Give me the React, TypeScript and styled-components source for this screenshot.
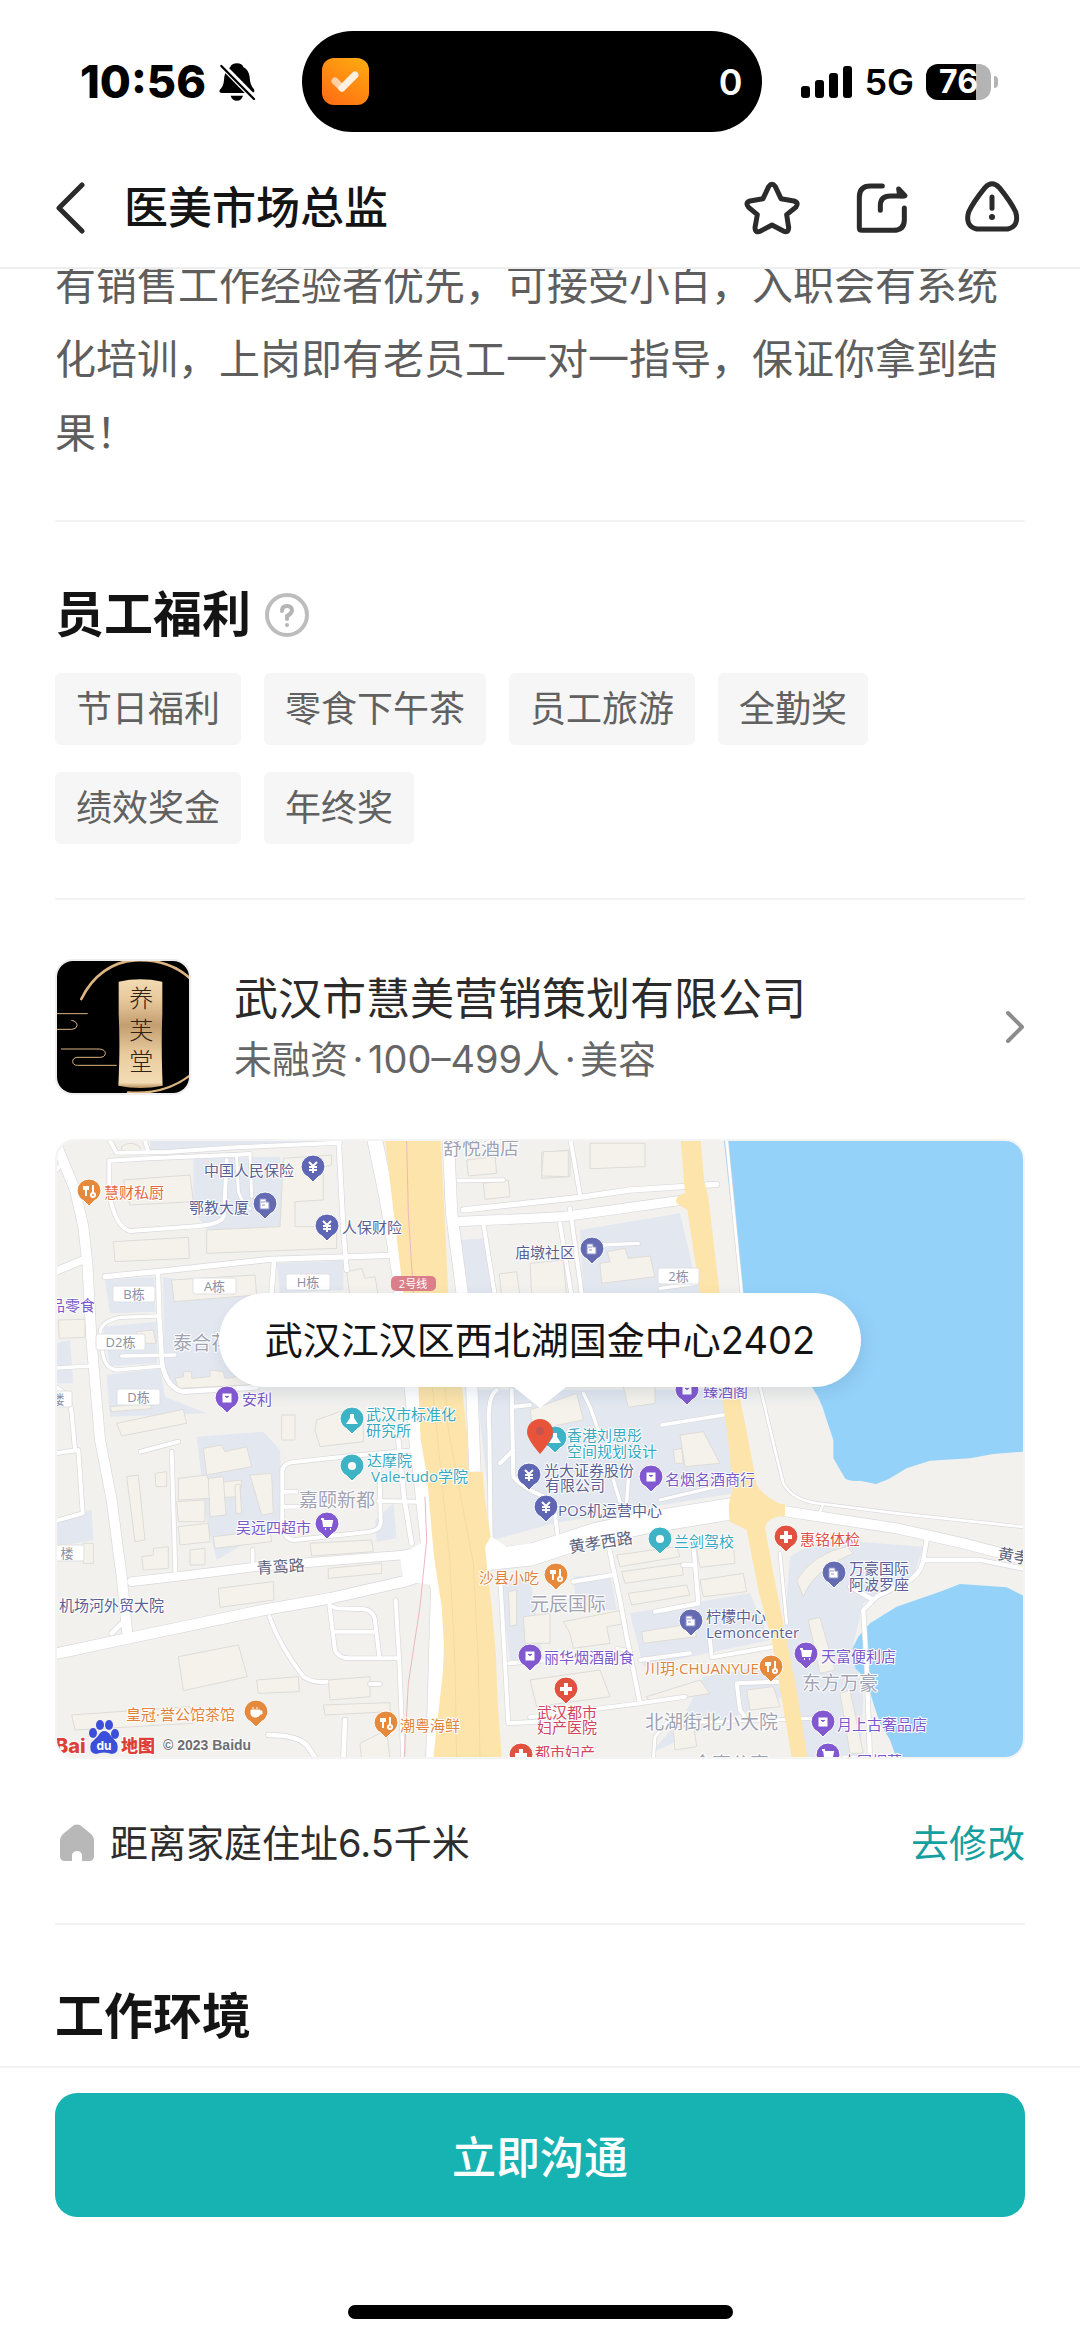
import React from "react";
import styled, { createGlobalStyle } from "styled-components";

const GlobalStyle = createGlobalStyle`
  *, *::before, *::after { box-sizing: border-box; }
  body {
    margin: 0;
    background: #ffffff;
    color: #141414;
    font-family: Inter, "Noto Sans CJK SC", sans-serif;
  }
  h1, h2, p, ul { margin: 0; padding: 0; }
  button { border: 0; padding: 0; background: none; font: inherit; color: inherit; cursor: pointer; }
  svg { display: block; flex: none; }
`;

const Page = styled.div`
  min-height: 100vh;
  display: flex;
  flex-direction: column;
  background: #ffffff;
`;

/* ---------- header ---------- */

const Header = styled.header`
  position: sticky;
  top: 0;
  z-index: 2;
  background: #ffffff;
  border-bottom: 2px solid #eeeeee;
`;

const StatusBar = styled.div`
  display: flex;
  align-items: center;
  padding: 31px 82px 16px 80px;
  color: #000000;
`;

const ClockGroup = styled.div`
  flex: 1;
  display: flex;
  align-items: center;
  gap: 12px;
`;

const Clock = styled.span`
  font-size: 45px;
  line-height: 48px;
  font-weight: 800;
`;

const Island = styled.div`
  flex: none;
  width: 460px;
  height: 101px;
  padding: 0 20px;
  border-radius: 51px;
  background: #000000;
  color: #ffffff;
  display: flex;
  align-items: center;
  justify-content: space-between;
  font-size: 36px;
  font-weight: 600;
`;

const SignalGroup = styled.div`
  margin-left: 39px;
  display: flex;
  align-items: center;
`;

const NetworkLabel = styled.span`
  margin: 0 12px;
  font-size: 36px;
  line-height: 40px;
  font-weight: 600;
`;

const Battery = styled.span`
  width: 65px;
  height: 36px;
  border-radius: 12px;
  background: linear-gradient(to right, #000000 77%, #b4b4b4 77%);
  color: #ffffff;
  font-size: 32px;
  line-height: 36px;
  font-weight: 700;
  text-align: center;
`;

const BatteryNub = styled.span`
  width: 4px;
  height: 12px;
  margin-left: 3px;
  border-radius: 0 6px 6px 0;
  background: #b4b4b4;
`;

const NavBar = styled.nav`
  display: flex;
  align-items: center;
  height: 119px;
  padding: 0 56px 0 55px;
`;

const NavTitle = styled.h1`
  flex: 1;
  margin-left: 39px;
  font-size: 44px;
  line-height: 60px;
  font-weight: 500;
`;

const NavActions = styled.div`
  display: flex;
  gap: 46px;
`;

/* ---------- content ---------- */

const Content = styled.main`
  flex: 1;
  padding: 0 55px;
  margin-top: -21px;
`;

const Section = styled.section<{ $top: number; $bottom: number; $last?: boolean }>`
  padding: ${(p) => p.$top}px 0 ${(p) => p.$bottom}px;
  border-bottom: ${(p) => (p.$last ? "0" : "2px solid #f3f3f3")};
`;

const Description = styled.p`
  font-size: 41px;
  line-height: 74px;
  color: #5e5e5e;
`;

const HeadingRow = styled.div`
  display: flex;
  align-items: center;
  gap: 14px;
`;

const Heading = styled.h2`
  font-size: 49px;
  line-height: 60px;
  font-weight: 700;
`;

const TagList = styled.ul`
  display: flex;
  flex-wrap: wrap;
  gap: 27px 23px;
  margin-top: 28px;
  max-width: 900px;
  list-style: none;
`;

const Tag = styled.li`
  padding: 0 21px;
  border-radius: 6px;
  background: #f6f6f6;
  color: #616161;
  font-size: 36px;
  line-height: 72px;
`;

const CompanyLink = styled.a`
  display: flex;
  align-items: center;
  color: #2b2b2b;
  text-decoration: none;
`;

const CompanyLogo = styled.span`
  flex: none;
  width: 136px;
  height: 136px;
  border: 2px solid #eeeeee;
  border-radius: 18px;
  overflow: hidden;
`;

const CompanyText = styled.span`
  flex: 1;
  display: flex;
  flex-direction: column;
  gap: 4px;
  margin-left: 43px;
  padding-top: 4px;
`;

const CompanyName = styled.span`
  font-size: 44px;
  line-height: 56px;
`;

const CompanyFacts = styled.span`
  display: flex;
  font-size: 38px;
  line-height: 56px;
  color: #666666;
`;

const Dot = styled.span`
  width: 20px;
  text-align: center;
`;

const MapCard = styled.div`
  position: relative;
  height: 620px;
  margin-top: 44px;
  border: 2px solid #f4f4f4;
  border-radius: 20px;
  overflow: hidden;

  > svg { width: 100%; height: 100%; }
`;

const Callout = styled.div`
  position: absolute;
  top: 152px;
  left: 0;
  right: 0;
  width: fit-content;
  margin: 0 auto;
  padding: 0 46px;
  border-radius: 47px;
  background: #ffffff;
  font-size: 38px;
  line-height: 94px;
  white-space: nowrap;
  box-shadow: 4px 6px 16px rgba(60, 90, 130, 0.14);

  &::after {
    content: "";
    position: absolute;
    top: 100%;
    left: 50%;
    margin-left: -26px;
    border: 26px solid transparent;
    border-top: 21px solid #ffffff;
    border-bottom: 0;
  }
`;

const DistanceRow = styled.div`
  display: flex;
  align-items: center;
  gap: 16px;
  margin-top: 56px;
  font-size: 38px;
  line-height: 56px;
  color: #2d2d2d;
`;

const EditLink = styled.a`
  margin-left: auto;
  color: #159fa0;
  text-decoration: none;
`;

/* ---------- footer ---------- */

const Footer = styled.footer`
  position: sticky;
  bottom: 0;
  z-index: 2;
  padding: 25px 55px 22px;
  border-top: 2px solid #f3f3f3;
  background: #ffffff;
`;

const ChatButton = styled.button`
  display: block;
  width: 100%;
  height: 124px;
  border-radius: 22px;
  background: #17b3b3;
  color: #ffffff;
  font-size: 44px;
  font-weight: 500;
`;

const HomeIndicator = styled.div`
  width: 385px;
  height: 14px;
  margin: 88px auto 0;
  border-radius: 7px;
  background: #000000;
`;

/* ---------- icons ---------- */

const BellOff = () => (
  <svg width="38" height="40" viewBox="472 122 114 120" aria-hidden="true">
    <path d="M529 126Q513 126 509 137Q491 148 490 176Q489 194 477 206Q474 215 484 215H574Q584 213 580 204Q568 192 567 168Q565 146 548 137Q544 126 529 126Z" />
    <path d="M510 223H547Q542 238 529 238Q514 238 510 223Z" />
    <path d="M470 118L592 242" stroke="#fff" strokeWidth="19" />
    <path d="M482 134L580 233" stroke="#000" strokeWidth="7" strokeLinecap="round" />
  </svg>
);

const TaskBadge = () => (
  <svg width="47" height="47" viewBox="0 0 47 47" aria-hidden="true">
    <defs>
      <linearGradient id="badge" x1="0.8" y1="0" x2="0.2" y2="1">
        <stop offset="0" stopColor="#ffa810" />
        <stop offset="1" stopColor="#ff6e14" />
      </linearGradient>
    </defs>
    <rect width="47" height="47" rx="12" fill="url(#badge)" />
    <path d="M13 23L20 30" stroke="#ffd0a6" strokeWidth="7" strokeLinecap="round" />
    <path d="M20 30L33 17" stroke="#fff0e0" strokeWidth="7" strokeLinecap="round" />
  </svg>
);

const SignalBars = () => (
  <svg width="51" height="32" viewBox="0 0 51 32" aria-hidden="true">
    <rect x="0" y="20" width="9" height="12" rx="3" />
    <rect x="14" y="14" width="9" height="18" rx="3" />
    <rect x="28" y="7" width="9" height="25" rx="3" />
    <rect x="42" y="0" width="9" height="32" rx="3" />
  </svg>
);

const BackIcon = () => (
  <svg width="30" height="54" viewBox="0 0 30 54" fill="none" stroke="#2b2b2b" strokeWidth="5" strokeLinecap="round" strokeLinejoin="round" aria-hidden="true">
    <path d="M27 4L4 27L27 50" />
  </svg>
);

const navStroke = {
  width: 64,
  height: 64,
  fill: "none",
  stroke: "#2b2b2b",
  strokeWidth: 15,
  strokeLinecap: "round" as const,
  strokeLinejoin: "round" as const,
  "aria-hidden": true,
};

const StarIcon = () => (
  <svg {...navStroke} viewBox="121 467 192 192">
    <path d="M227 499L244 535L283 542Q299 547 288 561L261 583L267 622Q266 640 251 632L217 614L183 632Q167 640 166 622L173 583L147 561Q135 547 151 542L190 535L207 499Q217 485 227 499Z" />
  </svg>
);

const ShareIcon = () => (
  <svg {...navStroke} viewBox="451 467 192 192">
    <path d="M548 497H512Q479 497 479 530V622Q479 630 487 630H580Q614 630 614 598V563" />
    <path d="M542 570V556Q542 527 572 527H612" />
    <path d="M597 506L616 526H600Z" fill="#2b2b2b" />
  </svg>
);

const AlertIcon = () => (
  <svg {...navStroke} viewBox="782 467 192 192">
    <path d="M857 502Q878 479 900 502Q935 545 949 575Q961 617 925 626H832Q796 617 808 575Q822 545 857 502Z" />
    <path d="M878 530V564" />
    <circle cx="878" cy="590" r="9" fill="#2b2b2b" stroke="none" />
  </svg>
);

const HelpIcon = () => (
  <svg width="44" height="44" viewBox="0 0 44 44" fill="none" aria-hidden="true">
    <circle cx="22" cy="22" r="20" stroke="#bdbdbd" strokeWidth="4" />
    <path d="M17 18Q17 13 22 13Q27 13 27 18Q26 21 22 23V26" stroke="#b5b5b5" strokeWidth="4" strokeLinecap="round" />
    <circle cx="22" cy="32" r="2" fill="#b5b5b5" />
  </svg>
);

const ChevronRight = () => (
  <svg width="20" height="34" viewBox="0 0 20 34" fill="none" stroke="#8c8c8c" strokeWidth="4" strokeLinecap="round" strokeLinejoin="round" aria-hidden="true">
    <path d="M3 3L17 17L3 31" />
  </svg>
);

const HouseIcon = () => (
  <svg width="39" height="38" viewBox="0 0 39 38" aria-hidden="true">
    <path fill="#b8b8b8" d="M19 1Q22 0 25 1L36 10Q39 13 39 16V32Q39 37 34 37H27V31Q26 27 22 27Q18 27 17 31V37H10Q5 37 5 32V16Q5 13 8 10Z" />
  </svg>
);

const LogoArt = () => (
  <svg width="132" height="132" viewBox="22 30 396 396" aria-hidden="true">
    <defs>
      <linearGradient id="scroll" x1="0" y1="0" x2="0" y2="1">
        <stop offset="0" stopColor="#f3dbb2" />
        <stop offset="0.2" stopColor="#e6c79a" />
        <stop offset="0.42" stopColor="#c39e70" />
        <stop offset="0.7" stopColor="#e9cda0" />
        <stop offset="0.95" stopColor="#f3dcb4" />
        <stop offset="1" stopColor="#b98f5c" />
      </linearGradient>
    </defs>
    <rect x="22" y="30" width="396" height="396" fill="#000" />
    <g fill="none" stroke="#dcb582" strokeLinecap="round">
      <path strokeWidth="8" d="M95 144C130 72 190 32 255 28C320 25 380 42 425 86" />
      <path strokeWidth="7" d="M235 424C310 430 375 410 425 370" />
      <path strokeWidth="3" d="M22 188H113M66 208Q84 212 82 224Q80 235 66 235H22" />
      <path strokeWidth="3" d="M35 294H150Q167 296 167 307Q166 319 150 319H82Q69 321 69 332Q70 343 84 343H200" />
    </g>
    <path fill="url(#scroll)" d="M207 92Q272 78 338 92V190Q334 280 339 404Q272 418 206 404Q212 280 207 190Z" />
    <g fontFamily="'Noto Sans CJK SC', sans-serif" fontSize="72" fontWeight="300" fill="#2f2114" textAnchor="middle">
      <text x="275" y="168">养</text>
      <text x="275" y="264">芙</text>
      <text x="275" y="357">堂</text>
    </g>
  </svg>
);

/* ---------- map ---------- */

type PinKind = "yen" | "food" | "building" | "bag" | "flask" | "dot" | "cart" | "cross" | "cup";

const INK = {
  blue: "#5a5f94",
  orange: "#e0823a",
  coral: "#e36a3c",
  purple: "#7a58c8",
  teal: "#35a9bf",
  red: "#dc5148",
  rose: "#cf4560",
  area: "#9fa3b2",
  road: "#5f637c",
};

const PIN_FILL: Record<PinKind, string> = {
  yen: "#5f66b4",
  building: "#646bb0",
  food: "#e5893d",
  cup: "#e5893d",
  bag: "#8158cf",
  cart: "#8158cf",
  flask: "#3fb3c6",
  dot: "#3fb3c6",
  cross: "#e0523f",
};

const PIN_ART: Record<PinKind, React.ReactNode> = {
  yen: <path d="M-4 -5L0 -1L4 -5M0 -1V6M-4 0H4M-4 3H4" stroke="#fff" strokeWidth="2" fill="none" />,
  building: <path d="M-5 5V-5H1V-2H4V5ZM-3 -3V-1M-1 -3V-1M-3 1H0" fill="#fff" stroke="#8f95cc" strokeWidth="1" />,
  food: <path d="M-5 -5V-2H-1V-5M-3 -5V5M4 -6V2M2 4A2 2 0 1 0 6 4A2 2 0 1 0 2 4" stroke="#fff" strokeWidth="2" fill="none" />,
  cup: <path d="M-5 -2H4V2Q3 5 0 5H-2Q-5 4 -5 2ZM4 -1H6V2H4M-3 -5V-3M1 -5V-3" fill="#fff" stroke="#fff" strokeWidth="1" />,
  bag: <path d="M-5 -5H5V5H-5ZM-2 -2Q0 1 2 -2" fill="#fff" stroke="#8158cf" strokeWidth="1" />,
  cart: <path d="M-6 -5H-4L-3 2H4L5 -3H-4M-2 5H-1M3 5H4" fill="#fff" stroke="#fff" strokeWidth="2" />,
  flask: <path d="M-2 -5H2V-1L6 5H-6L-2 -1Z" fill="#fff" />,
  dot: <circle r="4" fill="#fff" />,
  cross: <path d="M0 -6V6M-6 0H6" stroke="#fff" strokeWidth="4" />,
};

const PINS: [number, number, PinKind][] = [
  [257, 26, "yen"], [33, 50, "food"], [209, 63, "building"], [271, 85, "yen"],
  [536, 108, "building"], [171, 257, "bag"], [296, 278, "flask"], [296, 325, "dot"],
  [271, 383, "cart"], [200, 571, "cup"], [330, 582, "food"], [500, 434, "food"],
  [499, 297, "flask"], [473, 334, "yen"], [595, 336, "bag"], [490, 366, "yen"],
  [604, 398, "dot"], [730, 396, "cross"], [778, 432, "building"], [635, 480, "building"],
  [474, 515, "bag"], [750, 513, "cart"], [715, 526, "food"], [510, 548, "cross"],
  [767, 581, "bag"], [465, 614, "cross"], [772, 614, "cart"], [631, 249, "bag"],
];

const PLACES: [number, number, string, string][] = [
  [148, 29, "中国人民保险", INK.blue],
  [48, 51, "慧财私厨", INK.coral],
  [133, 66, "鄂教大厦", INK.blue],
  [286, 86, "人保财险", INK.blue],
  [459, 111, "庙墩社区", INK.blue],
  [-6, 164, "品零食", INK.purple],
  [186, 258, "安利", INK.purple],
  [310, 273, "武汉市标准化", INK.teal],
  [310, 289, "研究所", INK.teal],
  [311, 319, "达摩院", INK.teal],
  [315, 335, "Vale-tudo学院", INK.teal],
  [180, 386, "吴远四超市", INK.purple],
  [3, 464, "机场河外贸大院", INK.blue],
  [70, 573, "皇冠·誉公馆茶馆", INK.orange],
  [344, 584, "潮粤海鲜", INK.orange],
  [423, 436, "沙县小吃", INK.orange],
  [511, 294, "香港刘思彤", INK.teal],
  [511, 310, "空间规划设计", INK.teal],
  [488, 329, "光大证券股份", INK.blue],
  [489, 344, "有限公司", INK.blue],
  [609, 338, "名烟名酒商行", INK.purple],
  [502, 369, "POS机运营中心", INK.blue],
  [618, 400, "兰剑驾校", INK.teal],
  [744, 398, "惠铭体检", INK.red],
  [793, 427, "万豪国际", INK.blue],
  [793, 443, "阿波罗座", INK.blue],
  [650, 475, "柠檬中心", INK.blue],
  [650, 491, "Lemoncenter", INK.blue],
  [488, 516, "丽华烟酒副食", INK.purple],
  [765, 515, "天富便利店", INK.purple],
  [589, 527, "川玥·CHUANYUE", INK.orange],
  [481, 571, "武汉都市", INK.rose],
  [481, 586, "妇产医院", INK.rose],
  [781, 583, "月上古奢品店", INK.purple],
  [479, 611, "都市妇产", INK.rose],
  [786, 620, "中国烟草", INK.purple],
  [647, 250, "臻酒阁", INK.purple],
];

const AREAS: [number, number, string][] = [
  [387, 7, "舒悦酒店"],
  [117, 202, "泰合花园"],
  [243, 359, "嘉颐新都"],
  [474, 463, "元辰国际"],
  [746, 542, "东方万豪"],
  [589, 581, "北湖街北小大院"],
  [637, 623, "金嘉公寓"],
];

const BLOCK_SIGNS: [number, number, number, string][] = [
  [57, 153, 42, "B栋"], [137, 145, 43, "A栋"], [230, 141, 44, "H栋"], [40, 201, 49, "D2栋"],
  [61, 256, 43, "D栋"], [602, 135, 41, "2栋"], [-6, 412, 34, "楼"], [-12, 258, 28, "楼"],
];

/* Each road: stroke width followed by its centre line. */
const ROADS: [number, string][] = [
  [12, "M180 33L200 68L350 66L560 52L870 38M285 33L295 66"],
  [12, "M178 92V190Q195 290 240 303L420 290Q520 285 522 255L530 90M178 92L300 85L560 74L600 72"],
  [9, "M560 80L565 185Q580 225 600 235M600 75L605 200"],
  [30, "M15 33L75 180L100 290L112 400L125 640L150 930L185 1110L215 1340L232 1510"],
  [22, "M15 425L110 385"],
  [12, "M15 60L45 90L20 120"],
  [16, "M165 440L320 425L660 388L1020 376"],
  [14, "M324 430L328 560L336 700Q350 775 400 785L620 772"],
  [14, "M672 390L664 500M866 33L880 300L890 420"],
  [10, "M325 558L210 562Q150 575 150 610L160 680Q170 718 200 720L335 708M215 678L375 675M20 714L120 708"],
  [12, "M15 770Q60 790 65 850L75 960M15 970L85 960L98 1150L20 1172"],
  [44, "M975 33L1010 200L1050 440L1085 760L1100 930L1135 1240L1165 1380L1160 1540L1150 1900"],
  [34, "M1195 33L1205 250L1235 480L1265 760L1275 1030"],
  [11, "M1218 33L1190 200M1225 152L1360 150"],
  [16, "M1240 240L1590 202L1740 180L2000 163"],
  [28, "M1215 275L1440 265L1540 260L1700 238L1900 210"],
  [12, "M1562 33L1590 195M1560 235L1580 380L1596 500M1530 280L1565 500M1300 280L1335 500"],
  [10, "M1650 345L1765 340M1830 475L1940 460"],
  [26, "M245 1355L420 1335L620 1310L1060 1275L1160 1255"],
  [32, "M0 1575L210 1530L640 1440L840 1405L1060 1355L1170 1320"],
  [12, "M608 1260V1310M365 965L376 1325M272 965L385 935"],
  [12, "M700 1015Q705 1000 725 997L900 978L1100 960M697 1015V1190Q705 1232 735 1230L960 1205Q995 1200 992 1170L988 1010M985 1113L1100 1115M700 1085H740M700 1130H745"],
  [14, "M1045 930L1062 1100L1085 1240"],
  [12, "M658 1460Q690 1550 760 1640Q790 1660 830 1655M960 1662H990"],
  [12, "M838 1425L855 1560Q865 1585 900 1585L1040 1585M838 1425L860 1435L945 1438Q975 1445 976 1480L988 1580M850 1505L972 1505M1037 1410L1048 1600L1060 1890"],
  [14, "M655 1815Q740 1815 770 1845L800 1890M885 1770L880 1890M185 1510L215 1480"],
  [12, "M1350 1330L1375 1780L1460 1775M1378 1600L1500 1590"],
  [12, "M1340 780Q1310 800 1318 900L1322 1240M1385 780L1390 1040Q1420 1080 1510 1110L1522 1210M1390 830L1440 825M1350 1000L1390 960"],
  [10, "M1600 790L1620 830L1655 930M1835 885L2020 855M1690 1050L1710 1115M1735 1050L1730 1115M1830 1110L2040 1060"],
  [64, "M1300 1290L1440 1275L1640 1210L1780 1180L2080 1130"],
  [30, "M2180 1140L2540 1195L2740 1240L2930 1290"],
  [13, "M2630 1230L2620 1290Q2610 1340 2560 1360L2480 1400L2440 1440L2450 1610L2460 1890M2400 1370L2470 1410M2620 1290L2790 1290L2930 1318"],
  [8, "M2030 33L2075 490L2130 770L2175 960L2200 1060Q2230 1115 2320 1122L2540 1150L2930 1192M2320 1122L2310 1145"],
  [13, "M1672 1230L1710 1410L1730 1520L1770 1720M1570 1355L1690 1335M1930 1240L1945 1420L1815 1445M1900 1305H1935"],
  [12, "M1770 1720L1905 1700M1440 1762L1770 1720M1980 1530L1985 1582L2170 1550M1770 1590L1920 1570M2190 1655L2060 1660L2070 1740L2085 1760"],
  [9, "M1810 1890L1815 1820L1850 1780L2300 1765M2190 1270L2210 1480M1725 1560L1700 1555"],
];

const BUILDINGS = [
  "M220 150L420 135L430 215L240 225Z", "M700 85L845 75V105L820 110V210L735 215V290H860V355L470 370V300L690 290Z",
  "M190 335L415 322L418 385L195 395Z", "M365 450L615 435L620 495L372 515Z", "M890 425L935 415L945 445L975 440L985 500H900Z",
  "M260 605L310 600L318 640H262Z", "M375 745L400 740V725H425V745L480 740V720L520 725L525 745L600 735V765L385 775Z",
  "M200 880L400 838L410 880L215 918Z", "M215 50Q240 30 270 50V66L215 68Z",
  "M180 830L300 820L305 836L185 845Z", "M25 570L105 568V622L28 625Z",
  "M695 855H735V930H695ZM800 870L870 845L940 860V935L810 950L795 900Z",
  "M1250 90L1335 80L1340 130L1255 138ZM1300 160L1375 150L1380 200L1305 208ZM1475 68L1560 60V140L1475 145Z",
  "M1620 40H1785V110L1620 116ZM1480 65L1555 62V140L1475 138Z",
  "M1650 400L1680 395L1672 365L1725 355L1735 385L1800 378L1815 440L1655 460Z", "M1348 432L1400 425L1410 500H1355ZM1440 400L1540 390L1550 500H1445Z",
  "M1720 770H1815V820L1735 832ZM1440 840L1580 790L1600 870L1450 900ZM1890 915L1960 905L2010 1000L1905 1010Z",
  "M385 1045L470 1035L480 1060L575 1050L570 1100L385 1110ZM460 955L515 945L525 965L590 950L605 1010L470 1035Z",
  "M475 1045L520 1040L528 1155L480 1160ZM555 1065L570 1062L575 1150H558ZM600 1035L665 1030L670 1150L635 1155Z",
  "M230 1040L265 1035L285 1230L255 1235ZM490 1220L660 1200L665 1235L495 1255ZM380 1115L465 1110V1175H385ZM385 1190L475 1180L480 1235L390 1245Z",
  "M315 1030L350 1025V1070H318ZM275 1280L310 1275V1255L355 1250V1315L280 1320ZM420 1260L465 1255V1305H420Z",
  "M780 1240L965 1230L970 1265L785 1278ZM835 1315L995 1300V1330L835 1345Z",
  "M505 1375L670 1355L672 1410L510 1432ZM385 1580L565 1545L592 1640L400 1682ZM620 1650L745 1640L748 1685L625 1690Z",
  "M835 1650L960 1640V1700L840 1710ZM65 1755L420 1730L430 1780L75 1800ZM820 1725L1020 1718V1745L825 1755ZM930 1840L1010 1800L1020 1890H935Z",
  "M100 1240H130V1300H100ZM1375 1385L1400 1380V1485L1380 1488Z",
  "M1700 1275L1880 1250L1890 1280L1710 1310ZM1715 1325L1895 1300L1900 1335L1725 1360ZM1735 1390L1910 1365L1920 1395L1745 1425Z",
  "M1940 1260L2050 1245L2055 1300L1950 1312ZM1950 1350L2080 1330L2090 1385L1960 1400ZM1775 1505L1930 1480L1940 1520L1780 1540Z",
  "M1540 1475L1720 1440L1730 1480L1670 1490L1680 1540L1570 1555L1560 1510ZM1440 1650L1650 1620L1680 1700L1460 1730Z",
  "M1420 1460L1500 1450V1540H1425ZM1790 1700L1950 1650L1980 1690L1800 1720ZM1870 1800L1930 1780L1940 1850L1875 1860Z",
  "M2240 1350Q2290 1270 2390 1250L2410 1270Q2290 1320 2260 1400ZM2275 1470L2310 1462L2355 1620L2310 1630Z",
  "M2370 1690L2400 1680L2440 1870H2400ZM2090 1680L2170 1670L2190 1730L2100 1740ZM1870 960L1895 955L1900 1000H1875Z",
];

const ZONES = [
  "M430 85L690 80L700 210L690 300L470 298L430 240Z",
  "M340 440L620 500L600 780L400 782Q345 770 342 690Z", "M165 450L312 440L316 545L180 550ZM160 590L320 575L322 700L180 708Z",
  "M170 735L330 715L345 800L470 850L180 860ZM680 400L880 392L880 480L690 490Z",
  "M440 920L640 905L690 960L700 1170L500 1290L470 1170Z", "M1230 330L1310 325L1330 490H1250Z",
  "M1590 300L1890 250L1930 420L1990 490H1600ZM1280 780L2010 780L2040 900L2050 1090L1690 1150L1510 1180L1330 1230Z",
  "M20 1170L125 1140L130 1230L20 1250ZM975 1170L1030 1120L1040 1225L980 1235Z",
  "M1350 1350L1440 1340L1480 1590H1380ZM1570 1340L1680 1330L1700 1440L1580 1440Z",
  "M1740 1450L2100 1390L2160 1530L1780 1610ZM1960 1640L2190 1600L2200 1700L1980 1790L1800 1870L1900 1760Z",
  "M2220 1280Q2330 1210 2420 1235L2620 1250L2590 1340L2440 1420L2410 1540L2440 1700L2430 1890H2270L2200 1540Z",
  "M300 33L860 33L560 50L300 60ZM20 640L60 630L70 760L20 760Z",
];

const MapArt = () => (
  <svg viewBox="1 0 966 616" preserveAspectRatio="xMidYMid slice" role="img" aria-label="地图">
    {/* Survey geometry is kept at three units per map pixel. */}
    <g transform="translate(-6 -11) scale(0.333333)">
      <rect x="0" y="0" width="2960" height="1920" fill="#f2f1ee" />
      {ZONES.map((d) => <path key={d} d={d} fill="#e2e7f0" />)}
      {BUILDINGS.map((d) => <path key={d} d={d} fill="#f5f2eb" stroke="#dedcd8" strokeWidth="3" />)}
      <path fill="#95d2fa" d="M2022 33L2040 200L2065 370L2072 470L2100 560L2260 740Q2310 790 2330 870L2350 930V985L2385 1045Q2400 1056 2430 1052L2478 1062L2515 1048L2570 1015L2640 992L2760 985L2830 972L2930 964V33Z" />
      <path fill="#95d2fa" d="M2930 1402L2870 1372L2730 1362L2670 1385L2540 1430L2460 1480L2425 1520L2408 1555L2416 1615L2450 1650L2470 1720L2490 1780L2520 1830L2545 1900H2930Z" />
      <g fill="none" strokeLinejoin="round" strokeLinecap="round">
        {ROADS.map(([w, d]) => <path key={d} d={d} stroke="#d9d9dc" strokeWidth={w + 4} />)}
        {ROADS.map(([w, d]) => <path key={d} d={d} stroke="#ffffff" strokeWidth={w} />)}
      </g>
      <path fill="#ffffff" d="M1050 1275L1120 1235L1170 1230V1370L1060 1350ZM1305 1240L1325 1220L1370 1250L1440 1240V1300L1310 1315Z" />
      <g fill="#fde4aa">
        <path d="M1005 30H1172L1195 490L1236 770L1253 930L1255 1025H1298L1305 1110L1322 1220L1305 1250L1312 1320L1325 1430L1338 1580L1342 1700L1356 1900H1148L1184 1580L1175 1430L1152 1280L1130 1030L1112 930L1105 770L1060 490L1030 240Z" />
        <path d="M1892 30H1952L1962 150L1975 200L2010 500L2072 815L2095 930L2120 1065Q2150 1110 2205 1125V1158Q2150 1160 2145 1195L2170 1330L2190 1430L2212 1540L2240 1680L2275 1900H2228L2165 1530L2125 1380L2090 1200L2040 1175Q2030 1120 2048 1080L2035 930L2018 815L1950 490L1912 240L1880 220Q1870 200 1905 190Z" />
      </g>
      <g fill="none" stroke="#f2d79c" strokeWidth="2">
        <path d="M1120 500L1160 900L1200 1300L1215 1600L1220 1890M1165 500L1195 900L1270 1300L1285 1600L1290 1890" />
      </g>
      <path fill="none" stroke="#eab8bf" strokeWidth="3" d="M1070 33L1075 250L1090 490M1125 1100L1130 1230L1110 1430L1075 1660L1062 1890" />
    </g>

    <g fontFamily="'Open Sans', 'Noto Sans CJK SC', sans-serif">
      {BLOCK_SIGNS.map(([x, y, w, t]) => (
        <g key={`${t}${y}`}>
          <rect x={x} y={y - 8} width={w} height="16" rx="2" fill="#ffffff" stroke="#e0e0e4" strokeWidth="1" />
          <text x={x + w / 2} y={y + 5} fontSize="13" fill="#8b90a6" textAnchor="middle">{t}</text>
        </g>
      ))}
      <rect x="335" y="135" width="45" height="15" rx="5" fill="#dc7f8a" />
      <text x="357" y="147" fontSize="11" fill="#ffffff" textAnchor="middle">2号线</text>

      {PINS.map(([x, y, kind]) => (
        <g key={`${x}-${y}`} transform={`translate(${x} ${y})`}>
          <path d="M-12 0A12 12 0 1 1 12 0Q11 7 5 10L0 15L-5 10Q-11 7 -12 0Z" fill={PIN_FILL[kind]} stroke="#ffffff" strokeWidth="1" />
          {PIN_ART[kind]}
        </g>
      ))}

      <g stroke="#ffffff" strokeWidth="2" strokeLinejoin="round" style={{ paintOrder: "stroke" }}>
        {AREAS.map(([x, y, t]) => <text key={t} x={x} y={y + 7} fontSize="19" fill={INK.area}>{t}</text>)}
        {PLACES.map(([x, y, t, c]) => <text key={t} x={x} y={y + 6} fontSize="15" fill={c}>{t}</text>)}
        <text fontSize="16" fill={INK.road} transform="translate(201 433) rotate(-4)">青鸾路</text>
        <text fontSize="16" fill={INK.road} transform="translate(514 412) rotate(-9)">黄孝西路</text>
        <text fontSize="16" fill={INK.road} transform="translate(941 418) rotate(10)">黄孝西路</text>
      </g>

      <path d="M484 278A13 13 0 0 1 497 291Q497 298 484 313Q471 298 471 291A13 13 0 0 1 484 278Z" fill="#e8543a" />
      <circle cx="484" cy="290" r="4" fill="#c65350" />

      <g stroke="#ffffff" strokeWidth="2" style={{ paintOrder: "stroke" }}>
        <text x="-1" y="612" fontFamily="Inter, sans-serif" fontSize="20" fontWeight="800" fill="#dd3f37">Bai</text>
        <text x="65" y="611" fontSize="17" fontWeight="900" fill="#dd3f37">地图</text>
        <text x="107" y="609" fontFamily="'Liberation Sans', sans-serif" fontSize="14" fontWeight="700" fill="#6e6e72">© 2023 Baidu</text>
      </g>
      <g fill="#3c4fd8">
        <ellipse cx="37" cy="592" rx="4" ry="5" />
        <ellipse cx="44" cy="584" rx="4" ry="5" />
        <ellipse cx="53" cy="584" rx="4" ry="5" />
        <ellipse cx="59" cy="593" rx="4" ry="5" />
        <path d="M48 590Q52 590 55 595L61 602Q64 612 56 613Q48 610 40 613Q32 612 35 602L42 595Q45 590 48 590Z" />
      </g>
      <text x="48" y="609" fontFamily="Inter, sans-serif" fontSize="12" fontWeight="700" fill="#ffffff" textAnchor="middle">du</text>
    </g>
  </svg>
);

const BENEFITS = ["节日福利", "零食下午茶", "员工旅游", "全勤奖", "绩效奖金", "年终奖"];

export default function App() {
  return (
    <Page>
      <GlobalStyle />
      <Header>
        <StatusBar>
          <ClockGroup>
            <Clock>10:56</Clock>
            <BellOff />
          </ClockGroup>
          <Island>
            <TaskBadge />
            <span>0</span>
          </Island>
          <SignalGroup>
            <SignalBars />
            <NetworkLabel>5G</NetworkLabel>
            <Battery>76</Battery>
            <BatteryNub />
          </SignalGroup>
        </StatusBar>
        <NavBar>
          <button type="button" aria-label="返回"><BackIcon /></button>
          <NavTitle>医美市场总监</NavTitle>
          <NavActions>
            <button type="button" aria-label="收藏"><StarIcon /></button>
            <button type="button" aria-label="分享"><ShareIcon /></button>
            <button type="button" aria-label="举报"><AlertIcon /></button>
          </NavActions>
        </NavBar>
      </Header>

      <Content>
        <Section $top={0} $bottom={50}>
          <Description>
            有销售工作经验者优先，可接受小白，入职会有系统化培训，上岗即有老员工一对一指导，保证你拿到结果！
          </Description>
        </Section>

        <Section $top={63} $bottom={54}>
          <HeadingRow>
            <Heading>员工福利</Heading>
            <button type="button" aria-label="福利说明"><HelpIcon /></button>
          </HeadingRow>
          <TagList>
            {BENEFITS.map((b) => <Tag key={b}>{b}</Tag>)}
          </TagList>
        </Section>

        <Section $top={59} $bottom={52}>
          <CompanyLink href="#company">
            <CompanyLogo><LogoArt /></CompanyLogo>
            <CompanyText>
              <CompanyName>武汉市慧美营销策划有限公司</CompanyName>
              <CompanyFacts>
                未融资<Dot>·</Dot>100–499人<Dot>·</Dot>美容
              </CompanyFacts>
            </CompanyText>
            <ChevronRight />
          </CompanyLink>
          <MapCard>
            <MapArt />
            <Callout>武汉江汉区西北湖国金中心2402</Callout>
          </MapCard>
          <DistanceRow>
            <HouseIcon />
            <span>距离家庭住址6.5千米</span>
            <EditLink href="#address">去修改</EditLink>
          </DistanceRow>
        </Section>

        <Section $top={62} $bottom={18} $last>
          <Heading>工作环境</Heading>
        </Section>
      </Content>

      <Footer>
        <ChatButton type="button">立即沟通</ChatButton>
        <HomeIndicator />
      </Footer>
    </Page>
  );
}
